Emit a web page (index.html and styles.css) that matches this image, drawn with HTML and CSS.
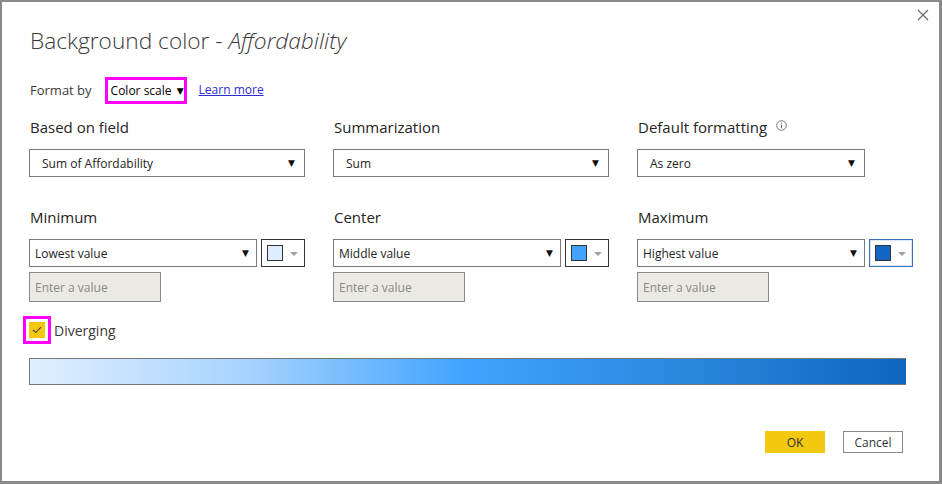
FILE: index.html
```html
<!DOCTYPE html>
<html>
<head>
<meta charset="utf-8">
<link rel="stylesheet" href="styles.css">
</head>
<body>
<div class="dialog">
  <button class="close" aria-label="Close">
    <svg width="12" height="12" viewBox="0 0 12 12"><path d="M1 1 L11 11 M11 1 L1 11" stroke="#666" stroke-width="1.1" fill="none"/></svg>
  </button>
  <h1 class="title">Background color - <em>Affordability</em></h1>
  <div class="format-row">
    <span class="format-label">Format by</span>
    <div class="hl-box"><span class="format-select">Color scale <span class="tri">&#9660;</span></span></div>
    <a class="learn" href="#">Learn more</a>
  </div>

  <div class="grid row1">
    <div class="field">
      <div class="label">Based on field</div>
      <div class="select wide"><span>Sum of Affordability</span><span class="arrow">&#9660;</span></div>
    </div>
    <div class="field">
      <div class="label">Summarization</div>
      <div class="select wide"><span>Sum</span><span class="arrow">&#9660;</span></div>
    </div>
    <div class="field">
      <div class="label">Default formatting
        <svg class="info" width="11" height="11" viewBox="0 0 11 11"><circle cx="5.5" cy="5.5" r="4.8" stroke="#666" stroke-width="0.9" fill="none"/><rect x="5" y="4.6" width="1" height="3.6" fill="#666"/><rect x="5" y="2.7" width="1" height="1" fill="#666"/></svg>
      </div>
      <div class="select wide short"><span>As zero</span><span class="arrow">&#9660;</span></div>
    </div>
  </div>

  <div class="grid row2">
    <div class="field">
      <div class="label">Minimum</div>
      <div class="pick">
        <div class="select"><span>Lowest value</span><span class="arrow">&#9660;</span></div>
        <div class="swatch-btn"><span class="swatch sw-min"></span><span class="caret"></span></div>
      </div>
      <div class="value-input">Enter a value</div>
    </div>
    <div class="field">
      <div class="label">Center</div>
      <div class="pick">
        <div class="select"><span>Middle value</span><span class="arrow">&#9660;</span></div>
        <div class="swatch-btn"><span class="swatch sw-mid"></span><span class="caret"></span></div>
      </div>
      <div class="value-input">Enter a value</div>
    </div>
    <div class="field">
      <div class="label">Maximum</div>
      <div class="pick">
        <div class="select"><span>Highest value</span><span class="arrow">&#9660;</span></div>
        <div class="swatch-btn focused"><span class="swatch sw-max"></span><span class="caret"></span></div>
      </div>
      <div class="value-input">Enter a value</div>
    </div>
  </div>

  <div class="check-row">
    <div class="hl-check"><span class="checkbox">
      <svg width="10" height="8" viewBox="0 0 10 8"><path d="M1 4 L3.8 6.6 L9 1.2" stroke="#444" stroke-width="1.1" fill="none"/></svg>
    </span></div>
    <span class="check-label">Diverging</span>
  </div>

  <div class="gradient"></div>

  <div class="actions">
    <button class="btn ok">OK</button>
    <button class="btn cancel">Cancel</button>
  </div>
</div>
</body>
</html>
```

FILE: styles.css
```css
* { box-sizing: border-box; }
html, body { margin: 0; padding: 0; background: #fff; }
body { font-family: "Open Sans", "Noto Sans", sans-serif; color: #252423; }

.dialog {
  position: relative;
  width: 942px;
  height: 484px;
  border-style: solid;
  border-color: #8a8a8a;
  border-width: 2px 3px 3px 2px;
  padding: 24px 0 0 27px;
  background: #fff;
}

.close {
  position: absolute;
  top: 6px;
  right: 9px;
  width: 14px;
  height: 14px;
  padding: 1px;
  border: 0;
  background: none;
  display: flex;
}

.title {
  margin: 0;
  font-weight: 300;
  font-size: 22.7px;
  line-height: 30px;
  color: #3b3a39;
  padding-left: 1px;
}
.title em { font-style: italic; }

.format-row {
  display: flex;
  align-items: center;
  margin-top: 21px;
  height: 27px;
}
.format-label {
  font-size: 13px;
  color: #3b3a39;
  margin-left: 1px;
  margin-right: 13px;
  position: relative;
  top: -1px;
}
.hl-box {
  border: 3px solid #ff00ff;
  height: 27px;
  width: 82px;
  display: flex;
  align-items: center;
  padding-left: 3px;
}
.format-select {
  font-size: 12px;
  color: #000;
}
.tri { font-family: "DejaVu Sans", sans-serif; font-size: 9px; margin-left: 2px; position: relative; top: -1px; }
.learn {
  margin-left: 12px;
  font-size: 12px;
  color: #2e2ed0;
  text-decoration: underline;
  position: relative;
  top: -1px;
}

.grid {
  display: grid;
  grid-template-columns: 276px 276px 276px;
  column-gap: 28px;
}
.row1 { margin-top: 13px; }
.row2 { margin-top: 30px; }

.label {
  font-size: 15px;
  line-height: 20px;
  color: #252423;
  padding-left: 1px;
  margin-bottom: 12px;
  display: flex;
  align-items: center;
}
.info { margin-left: 9px; position: relative; top: -2px; }

.select {
  height: 28px;
  border: 1px solid #7a7a7a;
  display: flex;
  align-items: center;
  justify-content: space-between;
  padding: 0 7px 0 5px;
  font-size: 12px;
  color: #252423;
  background: #fff;
  flex: 0 0 228px;
}
.select.wide { padding: 0 9px 0 12px; }
.select.short { width: 228px; }
.arrow { font-family: "DejaVu Sans", sans-serif; font-size: 9px; color: #111; }

.pick { display: flex; gap: 4px; }
.swatch-btn {
  width: 44px;
  height: 28px;
  border: 1px solid #333;
  display: flex;
  align-items: center;
  padding-left: 5px;
}
.swatch-btn.focused { border-color: #3b6fb6; box-shadow: inset 0 0 0 1px #dbe6f4; }
.swatch {
  width: 16px;
  height: 16px;
  border: 1px solid #333;
}
.sw-min { background: #deeefe; }
.sw-mid { background: #3fa3ff; }
.sw-max { background: #1267c3; }
.caret {
  margin-left: 7px;
  width: 0; height: 0;
  border-left: 4px solid transparent;
  border-right: 4px solid transparent;
  border-top: 4px solid #a0a0a0;
  margin-top: 1px;
}

.value-input {
  margin-top: 5px;
  width: 132px;
  height: 30px;
  border: 1px solid #8a8a8a;
  background: #ebe9e3;
  font-size: 12px;
  color: #8a8886;
  display: flex;
  align-items: center;
  padding-left: 5px;
}

.check-row {
  display: flex;
  align-items: center;
  margin-top: 14px;
  margin-left: -6px;
  height: 28px;
}
.hl-check {
  border: 3px solid #ff00ff;
  width: 28px;
  height: 28px;
  padding: 3px;
}
.checkbox {
  width: 16px;
  height: 16px;
  background: #f2c811;
  display: flex;
  align-items: center;
  justify-content: center;
}
.check-label {
  margin-left: 3px;
  font-size: 14px;
  color: #3b3a39;
}

.gradient {
  margin-top: 14px;
  width: 877px;
  height: 27px;
  border: 1px solid #777;
  border-right: 0;
  background: linear-gradient(to right, #e0effe 0%, #a6d2fd 25%, #3fa3ff 50%, #2a87dc 75%, #0f66bf 100%);
}

.actions {
  display: flex;
  justify-content: flex-end;
  gap: 18px;
  margin-top: 46px;
  padding-right: 36px;
}
.btn {
  width: 60px;
  height: 22px;
  font-family: "Open Sans", "Noto Sans", sans-serif;
  font-size: 12px;
  color: #333;
  padding: 0;
}
.ok { background: #f2c811; border: 0; }
.cancel { background: #fff; border: 1px solid #8a8a8a; }
```
